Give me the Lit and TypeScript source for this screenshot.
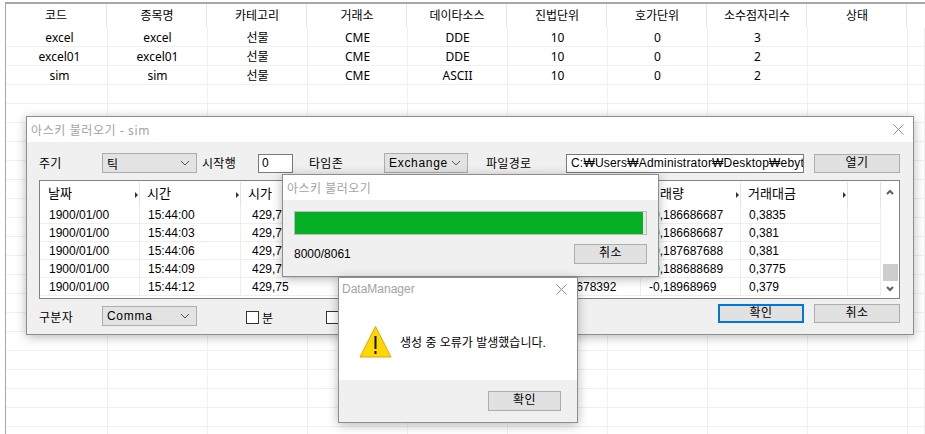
import { LitElement, html, css, svg } from 'lit';
import { customElement } from 'lit/decorators.js';

const GRID_COLS = ['코드', '종목명', '카테고리', '거래소', '데이타소스', '진법단위', '호가단위', '소수점자리수', '상태'];
const GRID_ROWS = [
  ['excel', 'excel', '선물', 'CME', 'DDE', '10', '0', '3', ''],
  ['excel01', 'excel01', '선물', 'CME', 'DDE', '10', '0', '2', ''],
  ['sim', 'sim', '선물', 'CME', 'ASCII', '10', '0', '2', ''],
];
const DATA_COLS = ['날짜', '시간', '시가', '고가', '저가', '종가', '거래량', '거래대금'];
const DATA_ROWS = [
  ['1900/01/00', '15:44:00', '429,75', '429,75', '429,75', '-0,18568657', '-0,186686687', '0,3835'],
  ['1900/01/00', '15:44:03', '429,75', '429,75', '429,75', '-0,18568657', '-0,186686687', '0,381'],
  ['1900/01/00', '15:44:06', '429,75', '429,75', '429,75', '-0,18578392', '-0,187687688', '0,381'],
  ['1900/01/00', '15:44:09', '429,75', '429,75', '429,75', '-0,18678392', '-0,188688689', '0,3775'],
  ['1900/01/00', '15:44:12', '429,75', '429,75', '429,75', '-0,18678392', '-0,18968969', '0,379'],
  ['', '', '', '', '', '', '', ''],
];
const EMPTY_ROWS = 19;
const DONE = 8000;
const TOTAL = 8061;

const closeIcon = svg`<svg width="11" height="11" viewBox="0 0 11 11"><path d="M.5 .5l10 10M10.5 .5l-10 10" stroke="#8c8c8c" fill="none"/></svg>`;
const chevron = svg`<svg width="10" height="6" viewBox="0 0 10 6"><path d="M1 1l4 4 4-4" stroke="#555" fill="none"/></svg>`;
const scrollChevron = svg`<svg width="8" height="6" viewBox="0 0 8 6"><path d="M1 1l3 3 3-3" stroke="#606060" stroke-width="2" fill="none"/></svg>`;
const warnIcon = svg`<svg width="33" height="33" viewBox="0 0 33 33">
  <path d="M16.5 1.5L32 32H1z" fill="#ffd800" stroke="#e0a410"/>
  <path d="M15.5 11h2v13h-2zM15.5 26h2v3h-2z" fill="#111"/>
</svg>`;

@customElement('app-root')
export class AppRoot extends LitElement {
  static styles = css`
    :host {
      display: block;
      position: relative;
      width: 925px;
      height: 434px;
      overflow: hidden;
      background: #fff;
      font-family: 'Liberation Sans', 'Noto Sans CJK KR', sans-serif;
      font-size: 12px;
      color: #000;
    }

    /* sheet behind the dialogs */
    .sheet {
      margin: 2px 0 0 5px;
      border-top: 2px solid #a8a8a8;
      border-left: 1px solid #a8a8a8;
      display: grid;
      grid-template-columns: 102px repeat(8, 100px) 1fr;
      grid-template-rows: 24px;
      grid-auto-rows: 19px;
      font-family: 'Noto Sans', 'Noto Sans CJK KR', sans-serif;
      height: 430px;
      overflow: hidden;
    }
    .sheet .head {
      line-height: 24px;
      margin-right: 1px;
      text-align: center;
      border-right: 1px solid #e6e6e6;
    }
    .sheet .cell {
      text-align: center;
      line-height: 20px;
      border-right: 1px solid #f0f0f0;
      border-bottom: 1px solid #f0f0f0;
      box-sizing: border-box;
    }
    .sheet .first {
      padding-left: 6px;
    }

    /* floating windows */
    .win {
      position: absolute;
      box-sizing: border-box;
      background: #f0f0f0;
      border: 1px solid #8e8e8e;
      box-shadow: 0 2px 10px rgba(0, 0, 0, 0.28);
      display: flex;
      flex-direction: column;
    }
    .title {
      background: #fff;
      color: #a3a3a3;
      display: flex;
      justify-content: space-between;
      align-items: center;
      flex: none;
      padding: 0 9px 0 4px;
      font-family: 'Noto Sans', 'Noto Sans CJK KR', sans-serif;
    }

    .import {
      left: 26px;
      top: 116px;
      width: 888px;
      height: 219px;
    }
    .import .title {
      height: 25px;
      letter-spacing: 0.6px;
    }
    .import .body {
      padding: 11px 13px 0 12px;
    }

    label {
      letter-spacing: 0.3px;
    }
    .form {
      display: grid;
      grid-template-columns: 63px 95px 61px 35px 91px 84px 98px 238px 1fr;
      height: 20px;
      align-items: center;
    }
    .form label {
      padding-bottom: 2px;
    }
    .form label.gap {
      padding-left: 5px;
    }
    .form label.gap-wide {
      padding-left: 16px;
    }
    .form label.gap-path {
      padding-left: 18px;
    }
    .combo {
      box-sizing: border-box;
      height: 20px;
      border: 1px solid #adadad;
      background: #e3e3e3;
      display: flex;
      align-items: center;
      justify-content: space-between;
      padding: 0 6px 0 4px;
      letter-spacing: 0.7px;
    }
    .input {
      box-sizing: border-box;
      height: 19px;
      border: 1px solid #7a7a7a;
      background: #fff;
      padding: 0 3px;
      line-height: 16px;
      white-space: nowrap;
      overflow: hidden;
    }
    .input.path {
      padding-left: 4px;
      letter-spacing: 0.2px;
    }
    .btn {
      box-sizing: border-box;
      height: 19px;
      border: 1px solid #adadad;
      background: #e1e1e1;
      text-align: center;
      line-height: 16px;
      letter-spacing: 0.5px;
    }
    .btn.open {
      width: 86px;
      margin-left: 10px;
    }
    .btn.default {
      border: 2px solid #0078d7;
      line-height: 14px;
    }

    .table {
      box-sizing: border-box;
      margin-top: 7px;
      height: 119px;
      border: 1px solid #828282;
      background: #fff;
      padding: 1px 1px 2px;
      display: flex;
    }
    .rows {
      flex: 1;
      overflow: hidden;
      display: grid;
      grid-template-columns: 99px 101px 100px 100px 100px 100px 100px 107px 1fr;
      grid-template-rows: 24px;
      grid-auto-rows: 18px;
    }
    .rows .th {
      line-height: 23px;
      padding-left: 7px;
      border-right: 1px solid #e3e3e3;
      position: relative;
      font-size: 13px;
    }
    .rows .th::after {
      content: '';
      position: absolute;
      right: 1px;
      top: 10px;
      border-left: 3px solid #333;
      border-top: 3px solid transparent;
      border-bottom: 3px solid transparent;
    }
    .rows .th.blank::after {
      display: none;
    }
    .rows .td {
      box-sizing: border-box;
      line-height: 19px;
      padding-left: 8px;
      border-right: 1px solid #eee;
      border-bottom: 1px solid #eee;
      white-space: nowrap;
      overflow: hidden;
    }
    .rows .td.num {
      padding-left: 11px;
    }
    .scroll {
      width: 16px;
      flex: none;
      margin-left: 1px;
      display: flex;
      flex-direction: column;
      align-items: center;
      padding: 7px 0 4px;
      box-sizing: border-box;
    }
    .thumb {
      width: 15px;
      height: 17px;
      background: #cdcdcd;
      margin-top: auto;
      margin-bottom: 5px;
    }
    .chev-up {
      transform: rotate(180deg);
      display: flex;
    }
    .chev-down {
      display: flex;
    }

    .foot {
      display: grid;
      grid-template-columns: 63px 95px 49px 80px 1fr 96px 86px;
      margin-top: 5px;
      height: 22px;
    }
    .foot .combo {
      margin-top: 2px;
    }
    .foot label.sep {
      padding-top: 6px;
      line-height: 16px;
    }
    .check {
      display: flex;
      align-items: center;
      gap: 3px;
      height: 20px;
      margin-top: 3px;
    }
    .box {
      box-sizing: border-box;
      width: 13px;
      height: 13px;
      border: 1px solid #333;
      background: #fff;
    }
    .foot .btn.default {
      width: 86px;
    }

    .progress {
      left: 282px;
      top: 174px;
      width: 377px;
      height: 103px;
    }
    .progress .title {
      height: 25px;
      letter-spacing: 0.5px;
    }
    .progress .body {
      padding: 11px 11px 0;
    }
    .bar {
      box-sizing: border-box;
      height: 24px;
      border: 1px solid #bcbcbc;
      background: #e6e6e6;
    }
    .fill {
      height: 100%;
      background: #06b025;
    }
    .status {
      display: flex;
      align-items: center;
      justify-content: space-between;
      margin-top: 8px;
      height: 21px;
    }
    .status .btn {
      width: 73px;
      height: 20px;
    }

    .message {
      left: 338px;
      top: 277px;
      width: 240px;
      height: 146px;
    }
    .message .title {
      height: 22px;
      padding: 0 10px 0 3px;
      font-family: 'Liberation Sans', sans-serif;
      font-size: 12px;
    }
    .message .content {
      flex: 1;
      background: #fff;
      display: flex;
      align-items: center;
      gap: 8px;
      padding: 2px 0 0 20px;
    }
    .message .actions {
      height: 42px;
      flex: none;
      display: flex;
      justify-content: flex-end;
      padding: 11px 16px 0 0;
      box-sizing: border-box;
    }
    .message .btn {
      width: 73px;
      height: 20px;
    }
  `;

  private renderSheet() {
    const empty = Array.from({ length: EMPTY_ROWS }, () => GRID_COLS.map(() => ''));
    return html`
      <div class="sheet">
        ${GRID_COLS.map((c) => html`<div class="head">${c}</div>`)}
        <div></div>
        ${[...GRID_ROWS, ...empty].map(
          (row) => html`
            ${row.map((v, i) => html`<div class="cell ${i === 0 ? 'first' : ''}">${v}</div>`)}
            <div class="cell"></div>
          `
        )}
      </div>
    `;
  }

  private renderCombo(value: string) {
    return html`<div class="combo"><span>${value}</span>${chevron}</div>`;
  }

  private renderImport() {
    return html`
      <section class="win import">
        <div class="title"><span>아스키 불러오기 - sim</span>${closeIcon}</div>
        <div class="body">
          <div class="form">
            <label>주기</label>
            ${this.renderCombo('틱')}
            <label class="gap">시작행</label>
            <div class="input">0</div>
            <label class="gap-wide">타임존</label>
            ${this.renderCombo('Exchange')}
            <label class="gap-path">파일경로</label>
            <div class="input path">C:₩Users₩Administrator₩Desktop₩ebyte₩data.csv</div>
            <div class="btn open">열기</div>
          </div>
          <div class="table">
            <div class="rows">
              ${DATA_COLS.map((c) => html`<div class="th">${c}</div>`)}
              <div class="th blank"></div>
              ${DATA_ROWS.map(
                (row) => html`
                  ${row.map((v, i) => html`<div class="td ${i === 2 ? 'num' : ''}">${v}</div>`)}
                  <div class="td"></div>
                `
              )}
            </div>
            <div class="scroll">
              <span class="chev-up">${scrollChevron}</span>
              <div class="thumb"></div>
              <span class="chev-down">${scrollChevron}</span>
            </div>
          </div>
          <div class="foot">
            <label class="sep">구분자</label>
            ${this.renderCombo('Comma')}
            <div></div>
            <div class="check"><span class="box"></span>분</div>
            <div class="check"><span class="box"></span></div>
            <div class="btn default">확인</div>
            <div class="btn">취소</div>
          </div>
        </div>
      </section>
    `;
  }

  private renderProgress() {
    return html`
      <section class="win progress">
        <div class="title"><span>아스키 불러오기</span></div>
        <div class="body">
          <div class="bar"><div class="fill" style="width:${(DONE / TOTAL) * 100}%"></div></div>
          <div class="status">
            <span>${DONE}/${TOTAL}</span>
            <div class="btn">취소</div>
          </div>
        </div>
      </section>
    `;
  }

  private renderMessage() {
    return html`
      <section class="win message">
        <div class="title"><span>DataManager</span>${closeIcon}</div>
        <div class="content">${warnIcon}<span>생성 중 오류가 발생했습니다.</span></div>
        <div class="actions"><div class="btn">확인</div></div>
      </section>
    `;
  }

  render() {
    return html`${this.renderSheet()}${this.renderImport()}${this.renderProgress()}${this.renderMessage()}`;
  }
}
